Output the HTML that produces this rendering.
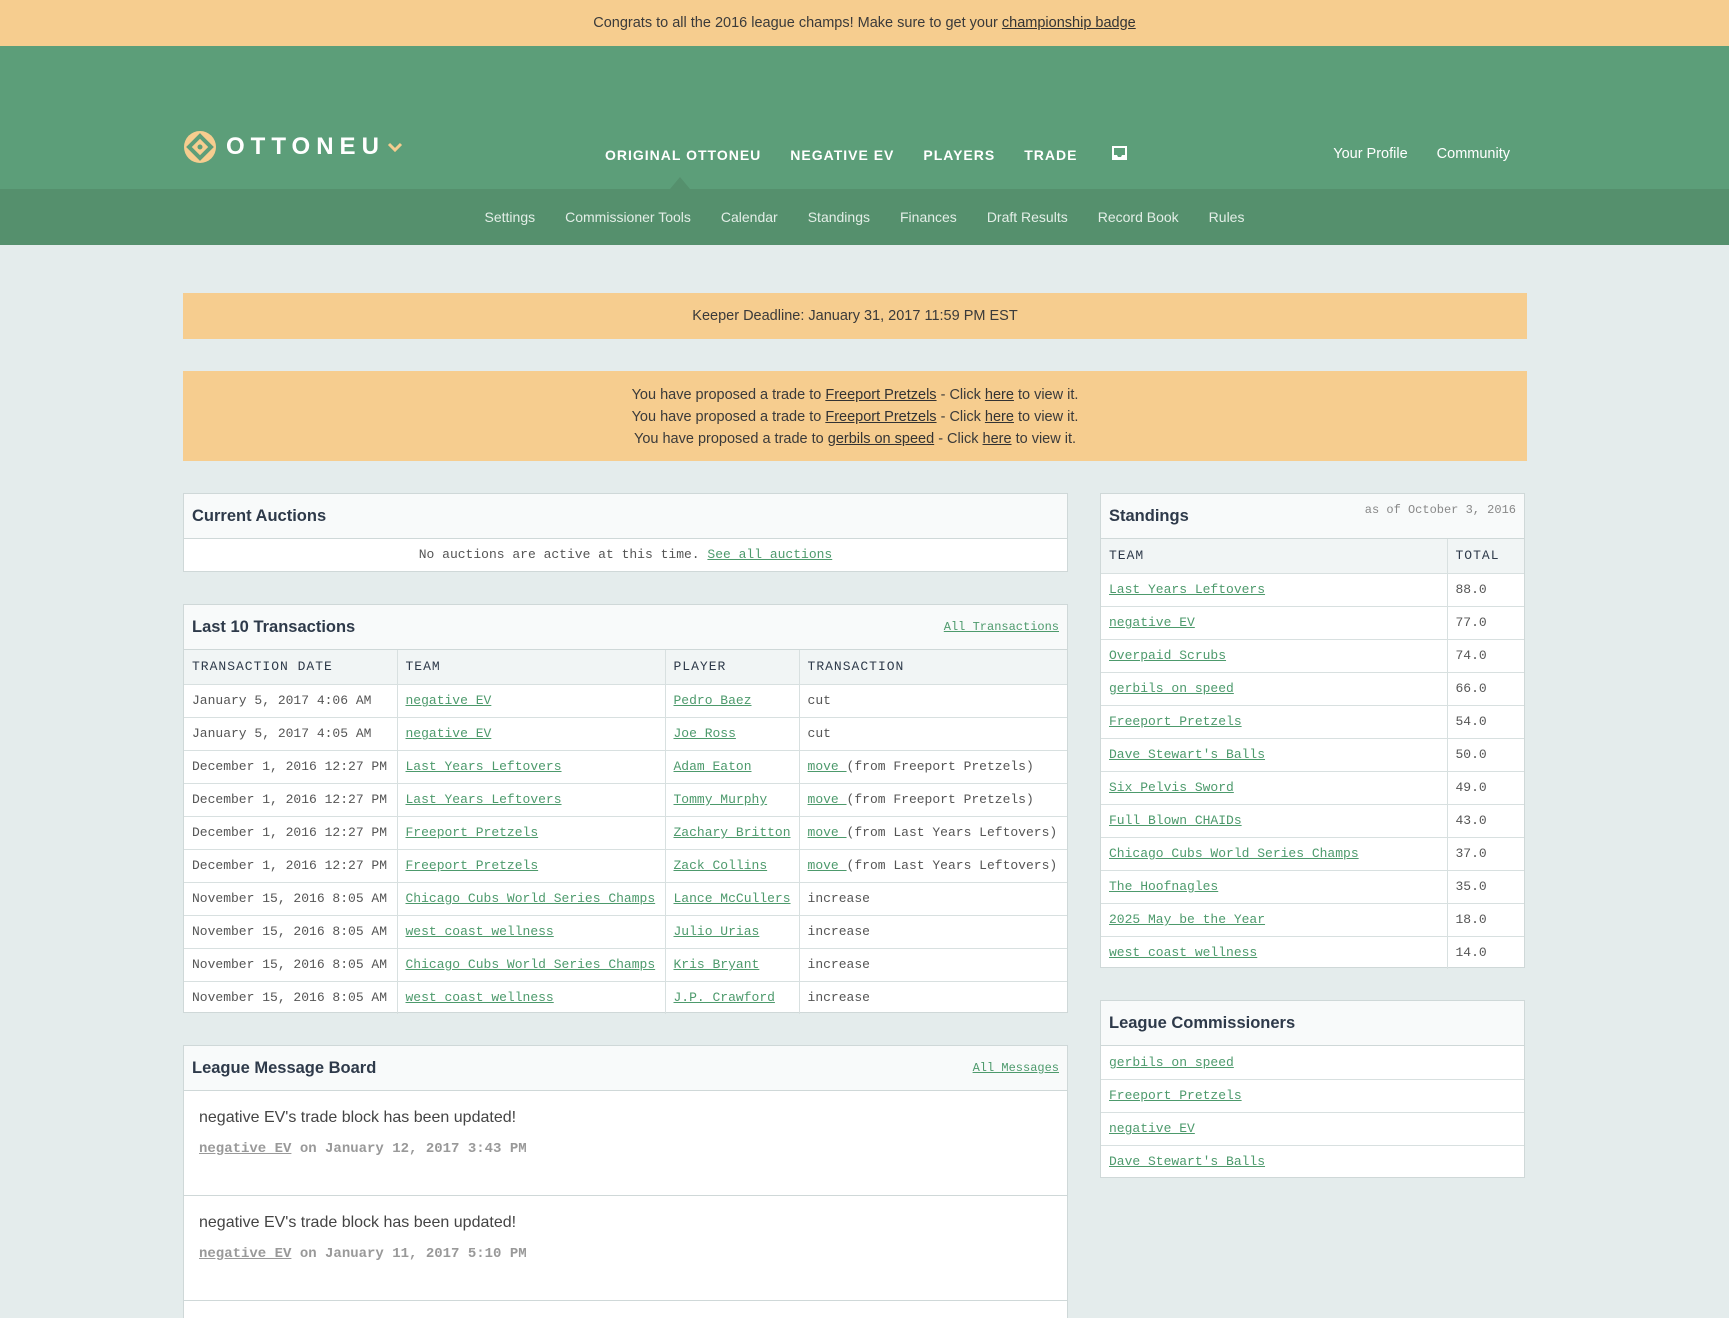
<!DOCTYPE html>
<html style="overflow:hidden;height:1318px"><head><meta charset="utf-8"><style>
*{box-sizing:border-box;margin:0;padding:0}
body{width:1729px;height:1318px;overflow:hidden;background:#e4ecec;font-family:"Liberation Sans",sans-serif;color:#333;position:relative}
a{color:#4d9a6c;text-decoration:underline}
.top{height:46px;background:#f6cd8f;text-align:center;font-size:14.5px;line-height:46px;color:#3a3a3a}
.top a{color:#333}
.hdr{height:143px;background:#5c9e79;position:relative}
.sub{height:56px;background:#55906d;text-align:center;font-size:14px;color:#e3eee7;line-height:56px}
.sub span{margin:0 15px}
.logo{position:absolute;left:184px;top:85px;display:flex;align-items:center}
.nav{position:absolute;top:99px;left:605px;color:#fff;font-weight:bold;font-size:14px;letter-spacing:1px}
.nav span{margin-right:29px}
.right{position:absolute;top:100px;right:219px;color:#fff;font-size:14.5px}
.right span{margin-left:29px}
.box{position:absolute;left:183px;width:1344px;background:#f6cd8f;text-align:center;font-size:14.5px;color:#3a3a3a}
.box a{color:#333}
.panel{position:absolute;background:#fff;border:1px solid #cfd8d8}
.ph{background:#f8fafa;border-bottom:1px solid #cfd8d8;height:45px;padding:0 8px;font-weight:bold;font-size:16.5px;color:#2e3a4a;line-height:45px;position:relative}
.ph .r{position:absolute;right:8px;top:0;font-family:"Liberation Mono",monospace;font-weight:normal;font-size:12px}
table{border-collapse:collapse;width:100%;font-family:"Liberation Mono",monospace;font-size:13px}
td,th{height:33px;border-bottom:1px solid #d8e0e0;border-right:1px solid #d8e0e0;padding:0 8px;text-align:left;white-space:nowrap;color:#555}
th{font-weight:normal;background:#f1f5f5;letter-spacing:1px;color:#2e3a4a;height:34px}
td:last-child,th:last-child{border-right:none}
tr:last-child td{border-bottom:none}
.mono{font-family:"Liberation Mono",monospace;font-size:13px;color:#555}
.post{border-bottom:1px solid #cfd8d8;height:105px;padding:18px 15px 0}
.post p{font-size:16px;color:#444}
.post div{margin-top:14px;font-family:"Liberation Mono",monospace;font-weight:bold;font-size:14px;color:#999}
.post div a{color:#999}
</style></head><body>
<div class="top">Congrats to all the 2016 league champs! Make sure to get your <a>championship badge</a></div>
<div class="hdr">
 <div class="logo">
  <svg width="32" height="32" viewBox="0 0 32 32"><circle cx="16" cy="16" r="16" fill="#f6cd8f"/><path d="M16 5 L27 16 L16 27 L5 16Z" fill="none" stroke="#5c9e79" stroke-width="4"/><circle cx="16" cy="16" r="2.5" fill="#5c9e79"/></svg>
  <span style="color:#fff;font-weight:bold;font-size:24px;letter-spacing:6px;margin-left:10px">OTTONEU</span>
  <svg width="16" height="10" viewBox="0 0 16 10" style="margin-left:2px"><path d="M2 2 L8 8 L14 2" fill="none" stroke="#f6cd8f" stroke-width="3"/></svg>
 </div>
 <div class="nav"><span>ORIGINAL OTTONEU</span><span>NEGATIVE EV</span><span>PLAYERS</span><span>TRADE</span>
  <svg width="17" height="16" viewBox="0 0 17 16" style="vertical-align:-1px"><path d="M1 1h15v14H1z" fill="#fff"/><path d="M3 3h11v7h-3l-1 2h-3l-1-2H3z" fill="#5c9e79"/></svg></div>
 <div style="position:absolute;left:670px;top:131px;width:0;height:0;border-left:10px solid transparent;border-right:10px solid transparent;border-bottom:12px solid #55906d"></div>
 <div class="right"><span>Your Profile</span><span>Community</span></div>
</div>
<div class="sub"><span>Settings</span><span>Commissioner Tools</span><span>Calendar</span><span>Standings</span><span>Finances</span><span>Draft Results</span><span>Record Book</span><span>Rules</span></div>

<div class="box" style="top:293px;height:46px;line-height:46px">Keeper Deadline: January 31, 2017 11:59 PM EST</div>
<div class="box" style="top:371px;height:90px;padding-top:13px;line-height:22px">
You have proposed a trade to <a>Freeport Pretzels</a> - Click <a>here</a> to view it.<br>
You have proposed a trade to <a>Freeport Pretzels</a> - Click <a>here</a> to view it.<br>
You have proposed a trade to <a>gerbils on speed</a> - Click <a>here</a> to view it.</div>

<div class="panel" style="left:183px;top:493px;width:885px;height:79px">
 <div class="ph">Current Auctions</div>
 <div class="mono" style="text-align:center;line-height:32px">No auctions are active at this time. <a>See all auctions</a></div>
</div>

<div class="panel" style="left:183px;top:604px;width:885px;height:409px">
 <div class="ph">Last 10 Transactions<span class="r"><a>All Transactions</a></span></div>
 <table><colgroup><col style="width:213px"><col style="width:268px"><col style="width:134px"><col></colgroup>
 <tr><th>TRANSACTION DATE</th><th>TEAM</th><th>PLAYER</th><th>TRANSACTION</th></tr>
 <tr><td>January 5, 2017 4:06 AM</td><td><a>negative EV</a></td><td><a>Pedro Baez</a></td><td>cut</td></tr>
 <tr><td>January 5, 2017 4:05 AM</td><td><a>negative EV</a></td><td><a>Joe Ross</a></td><td>cut</td></tr>
 <tr><td>December 1, 2016 12:27 PM</td><td><a>Last Years Leftovers</a></td><td><a>Adam Eaton</a></td><td><a>move </a>(from Freeport Pretzels)</td></tr>
 <tr><td>December 1, 2016 12:27 PM</td><td><a>Last Years Leftovers</a></td><td><a>Tommy Murphy</a></td><td><a>move </a>(from Freeport Pretzels)</td></tr>
 <tr><td>December 1, 2016 12:27 PM</td><td><a>Freeport Pretzels</a></td><td><a>Zachary Britton</a></td><td><a>move </a>(from Last Years Leftovers)</td></tr>
 <tr><td>December 1, 2016 12:27 PM</td><td><a>Freeport Pretzels</a></td><td><a>Zack Collins</a></td><td><a>move </a>(from Last Years Leftovers)</td></tr>
 <tr><td>November 15, 2016 8:05 AM</td><td><a>Chicago Cubs World Series Champs</a></td><td><a>Lance McCullers</a></td><td>increase</td></tr>
 <tr><td>November 15, 2016 8:05 AM</td><td><a>west coast wellness</a></td><td><a>Julio Urias</a></td><td>increase</td></tr>
 <tr><td>November 15, 2016 8:05 AM</td><td><a>Chicago Cubs World Series Champs</a></td><td><a>Kris Bryant</a></td><td>increase</td></tr>
 <tr><td>November 15, 2016 8:05 AM</td><td><a>west coast wellness</a></td><td><a>J.P. Crawford</a></td><td>increase</td></tr>
 </table>
</div>

<div class="panel" style="left:183px;top:1045px;width:885px;height:273px;border-bottom:none;overflow:hidden">
 <div class="ph">League Message Board<span class="r"><a>All Messages</a></span></div>
 <div class="post"><p>negative EV's trade block has been updated!</p><div><a>negative EV</a> on January 12, 2017 3:43 PM</div></div>
 <div class="post"><p>negative EV's trade block has been updated!</p><div><a>negative EV</a> on January 11, 2017 5:10 PM</div></div>
</div>

<div class="panel" style="left:1100px;top:493px;width:425px;height:475px">
 <div class="ph">Standings<span class="r" style="color:#888;top:-6px">as of October 3, 2016</span></div>
 <table><colgroup><col style="width:346px"><col></colgroup>
 <tr><th>TEAM</th><th>TOTAL</th></tr>
 <tr><td><a>Last Years Leftovers</a></td><td>88.0</td></tr>
 <tr><td><a>negative EV</a></td><td>77.0</td></tr>
 <tr><td><a>Overpaid Scrubs</a></td><td>74.0</td></tr>
 <tr><td><a>gerbils on speed</a></td><td>66.0</td></tr>
 <tr><td><a>Freeport Pretzels</a></td><td>54.0</td></tr>
 <tr><td><a>Dave Stewart's Balls</a></td><td>50.0</td></tr>
 <tr><td><a>Six Pelvis Sword</a></td><td>49.0</td></tr>
 <tr><td><a>Full Blown CHAIDs</a></td><td>43.0</td></tr>
 <tr><td><a>Chicago Cubs World Series Champs</a></td><td>37.0</td></tr>
 <tr><td><a>The Hoofnagles</a></td><td>35.0</td></tr>
 <tr><td><a>2025 May be the Year</a></td><td>18.0</td></tr>
 <tr><td><a>west coast wellness</a></td><td>14.0</td></tr>
 </table>
</div>

<div class="panel" style="left:1100px;top:1000px;width:425px;height:178px">
 <div class="ph">League Commissioners</div>
 <table>
 <tr><td><a>gerbils on speed</a></td></tr>
 <tr><td><a>Freeport Pretzels</a></td></tr>
 <tr><td><a>negative EV</a></td></tr>
 <tr><td><a>Dave Stewart's Balls</a></td></tr>
 </table>
</div>
</body></html>
